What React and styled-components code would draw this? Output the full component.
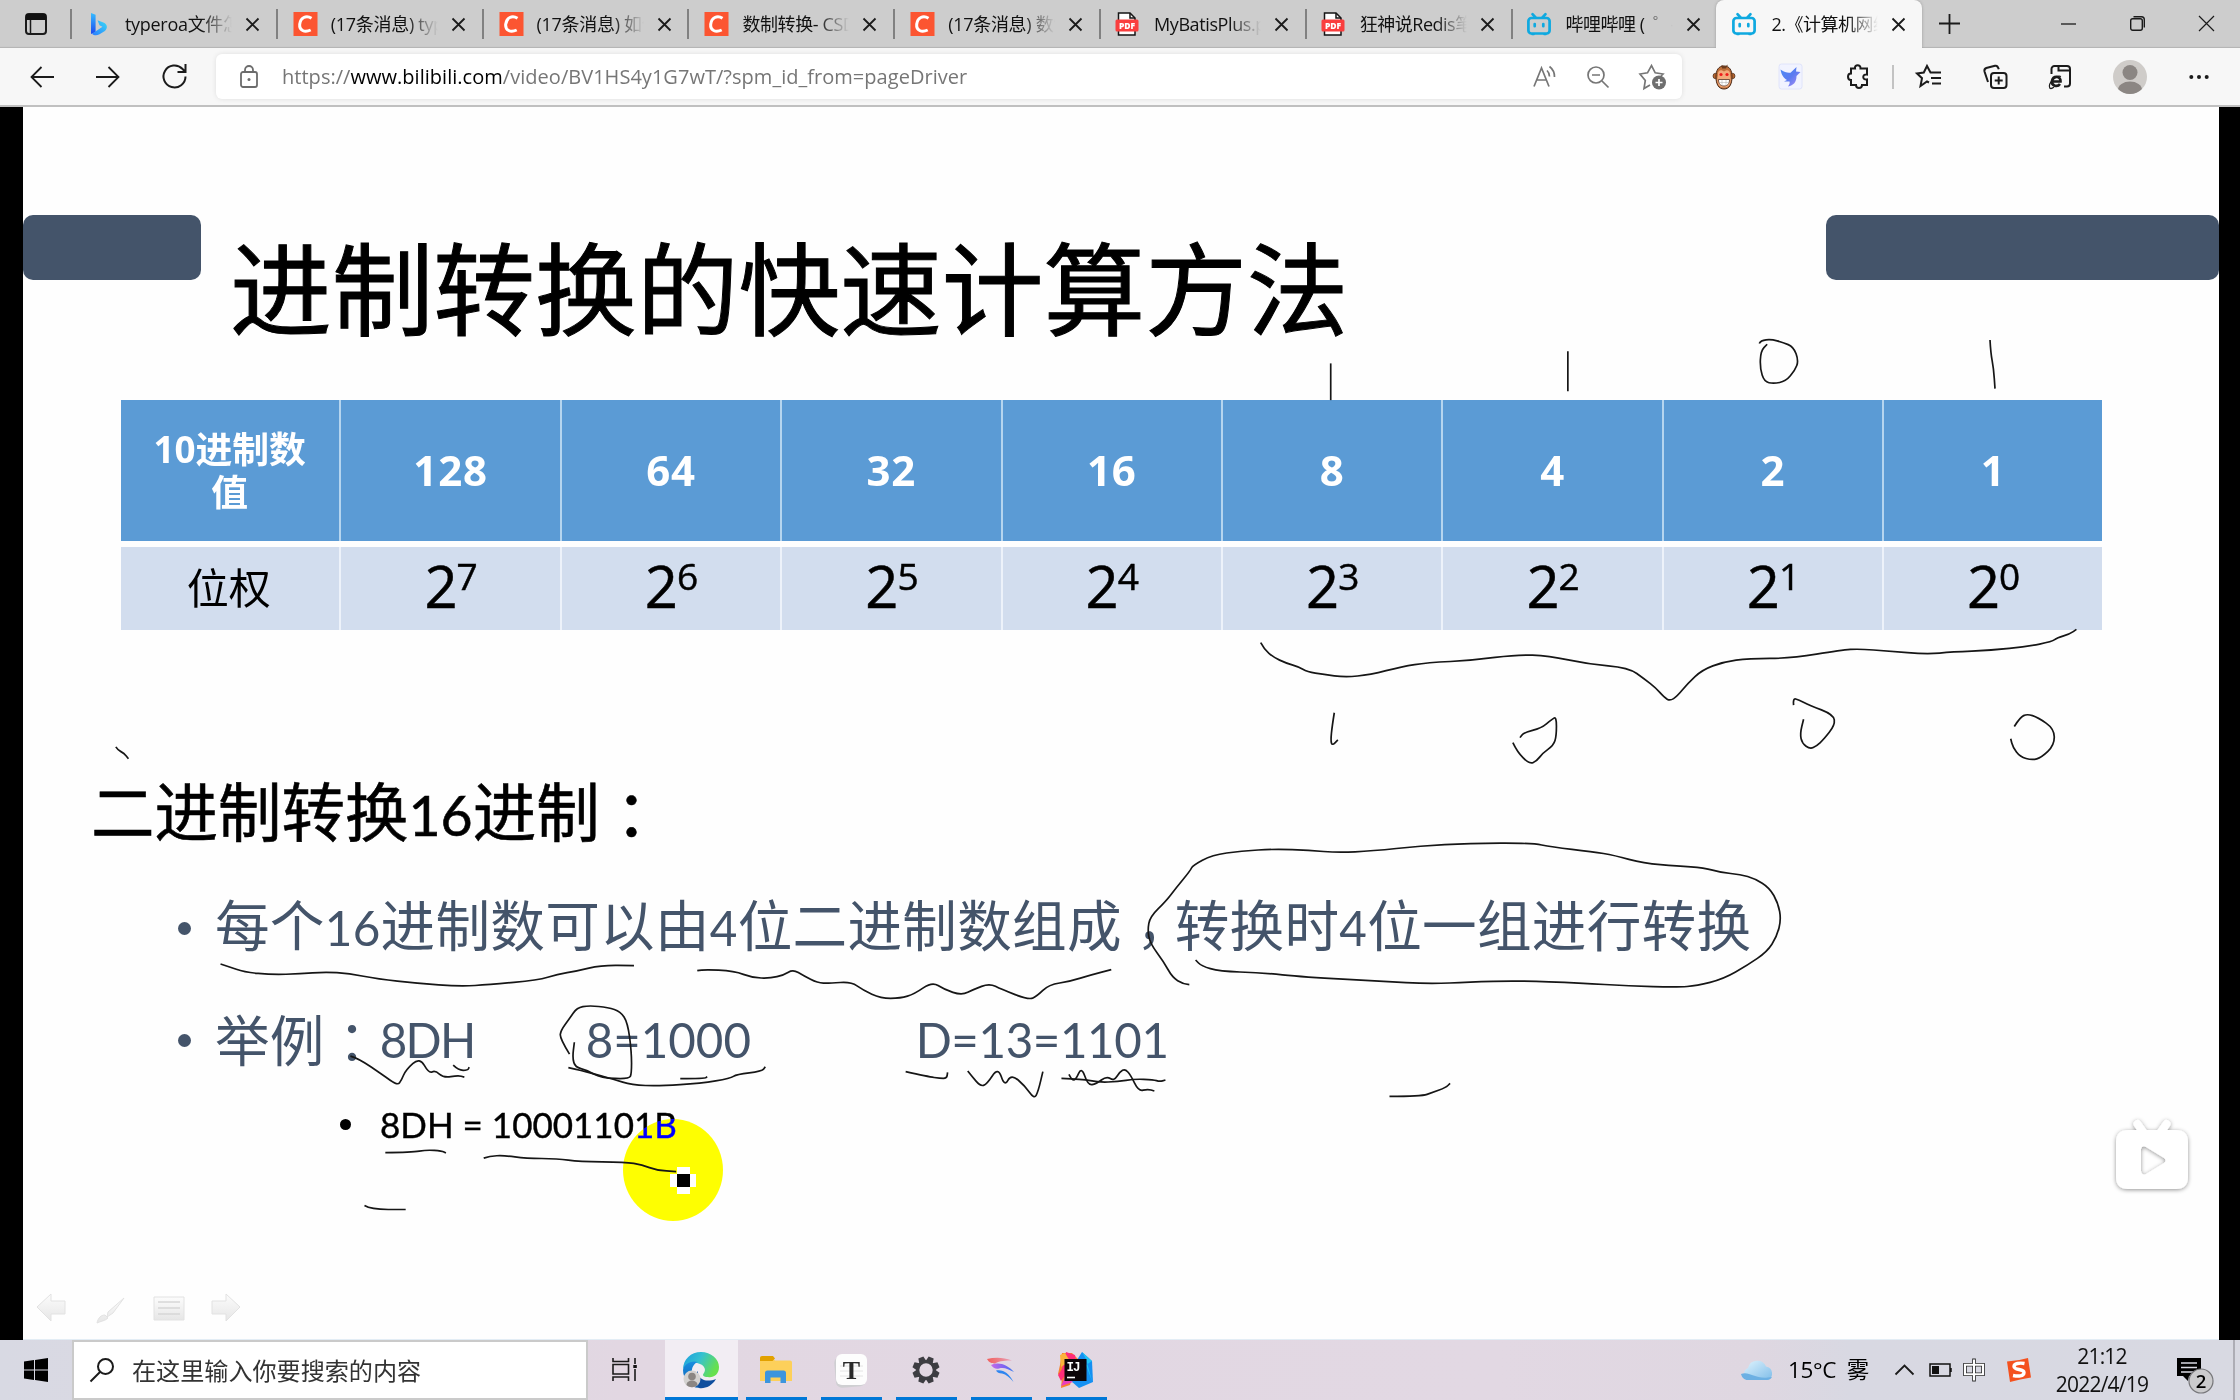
import React from "react";
import styled, { createGlobalStyle, css } from "styled-components";

const UI = `"Open Sans", "Noto Sans CJK SC", sans-serif`;
const HEI = `"Noto Sans CJK SC", sans-serif`;

const Global = createGlobalStyle`
  * { box-sizing: border-box; }
  html, body { margin: 0; background: #fff; }
  body { width: 2240px; height: 1400px; overflow: hidden; font-family: ${UI}; }
  svg { display: block; flex: none; overflow: visible; }
`;

const Screen = styled.div`
  width: 2240px;
  height: 1400px;
  display: flex;
  flex-direction: column;
`;

/* ---------- tab strip ---------- */
const TabStrip = styled.header`
  height: 48px;
  display: flex;
  background: #cdcdcd;
  box-shadow: inset 0 -2px 1px -1px #b4b4b4;
`;
const TabMenu = styled.div`
  width: 70px;
  padding: 13px 0 0 25px;
`;
const Tab = styled.div`
  width: ${(p) => (p.$active ? 206 : 205.8)}px;
  height: 48px;
  display: flex;
  align-items: center;
  padding-left: ${(p) => (p.$active ? 16 : 14)}px;
  ${(p) =>
    p.$active
      ? css`
          background: #f7f7f7;
          border-radius: 8px 8px 0 0;
          box-shadow: 0 0 3px #999;
          clip-path: inset(0 -4px 0 -4px);
        `
      : css`
          &::before {
            content: "";
            width: 2px;
            height: 30px;
            margin-left: -14px;
            margin-right: 14px;
            background: #818181;
          }
        `}
`;
const TabTitle = styled.div`
  width: 108px;
  margin: 0 13px 0 15px;
  overflow: hidden;
  white-space: pre;
  font-size: 18px;
  line-height: 30px;
  letter-spacing: ${(p) => p.$track ?? -0.5}px;
  color: #111;
  -webkit-mask-image: linear-gradient(90deg, #000 70%, transparent 99%);
  mask-image: linear-gradient(90deg, #000 70%, transparent 99%);
`;
const NewTab = styled.div`
  padding: 14px 0 0 17px;
  flex: 1;
`;
const WindowControls = styled.div`
  display: flex;
  gap: 54px;
  padding: 16px 26px 0 0;
`;

/* ---------- toolbar ---------- */
const Toolbar = styled.nav`
  height: 59px;
  display: flex;
  align-items: center;
  background: #f7f7f7;
  border-bottom: 2px solid #c0c0c0;
`;
const NavButtons = styled.div`
  width: 216px;
  display: flex;
  align-items: center;
  gap: 42px;
  padding-left: 30px;
`;
const AddressBar = styled.div`
  width: 1465.500px;
  height: 45px;
  display: flex;
  align-items: center;
  padding: 0 16px 0 24px;
  background: #fff;
  border-radius: 6px;
  box-shadow: 0 0 5px rgba(0, 0, 0, 0.1);
`;
const Url = styled.div`
  flex: 1;
  margin-left: 24px;
  font-size: 20px;
  letter-spacing: 0.03px;
  line-height: 44px;
  color: #767676;
  b { font-weight: 400; color: #000; }
`;
const AddressTools = styled.div`
  display: flex;
  align-items: center;
  gap: 30px;
`;
const Extensions = styled.div`
  flex: 1;
  display: flex;
  align-items: center;
  padding-left: 31px;
`;
const ExtItem = styled.div`
  margin-right: ${(p) => p.$after}px;
`;
const ToolDivider = styled.div`
  width: 2px;
  height: 24px;
  margin-right: 22px;
  background: #c3c3c3;
`;

/* ---------- slide ---------- */
const Stage = styled.main`
  height: 1233px;
  display: flex;
  background: #000;
`;
const Slide = styled.section`
  position: relative;
  width: 2196px;
  margin-left: 23px;
  background: #fefefe;
  border-bottom: 1px solid #e3edf5;
  padding-top: 108px;
`;
const SlideHeader = styled.div`
  height: 185px;
  display: flex;
`;
const Pill = styled.div`
  width: ${(p) => p.$w}px;
  height: 65px;
  background: #44546a;
  border-radius: 10px;
`;
const SlideTitle = styled.h1`
  flex: 1;
  margin: 9px 0 0 29px;
  font: 400 101.7px/120px ${HEI};
  -webkit-text-stroke: 1px #000;
  color: #000;
`;
const WeightTable = styled.div`
  width: 1981px;
  margin-left: 98px;
  display: grid;
  grid-template-columns: repeat(8, 220.4px) 1fr;
  grid-template-rows: 141px 83px;
  row-gap: 6px;
`;
const Cell = styled.div`
  display: flex;
  align-items: center;
  justify-content: center;
  border-right: 2px solid ${(p) => (p.$head ? "#b5d5ef" : "#edf2fa")};
  background: ${(p) => (p.$head ? "#5b9bd5" : "#d2ddee")};
  &:nth-child(9n) { border-right: 0; }
`;
const HeadLabel = styled.div`
  width: 162px;
  text-align: center;
  color: #fff;
  font: 700 36.800px/43px "Open Sans", "Noto Sans CJK SC", sans-serif;
  padding-right: 1px;
`;
const HeadNumber = styled.div`
  color: #fff;
  font: 700 42px/60px "Open Sans", sans-serif;
  letter-spacing: 0.8px;
  padding-bottom: 2px;
`;
const WeightLabel = styled.div`
  font: 400 42px/60px ${HEI};
  color: #000;
  padding: 0 3px 5px 0;
`;
const Power = styled.div`
  display: flex;
  font: 400 58px/70px "Open Sans", sans-serif;
  -webkit-text-stroke: 0.5px #000;
  letter-spacing: -1px;
  padding-bottom: 5px;
  color: #000;
  sup {
    font-size: 37px;
    line-height: 50px;
    vertical-align: baseline;
  }
`;
const SectionHeading = styled.h2`
  margin: 132px 0 0 68px;
  font: 400 63.5px/92px ${HEI};
  -webkit-text-stroke: 0.6px #000;
  color: #000;
`;
const Latin = styled.span`
  font-family: Lato, sans-serif;
  font-size: 0.872em;
`;
const Bullet = styled.div`
  display: flex;
  align-items: center;
  height: ${(p) => p.$h}px;
  margin-top: ${(p) => p.$top || 0}px;
  margin-left: ${(p) => p.$left}px;
  color: ${(p) => p.$color};
  white-space: pre;
  &::before {
    content: "";
    width: ${(p) => p.$dot}px;
    height: ${(p) => p.$dot}px;
    margin-right: ${(p) => p.$gap}px;
    border-radius: 50%;
    background: currentColor;
  }
`;
const BulletText = styled.div`
  font: 400 54.6px/80px ${HEI};
  letter-spacing: 0.28px;
  padding-bottom: 5px;
`;
const Centered = styled.span`
  font-family: "Noto Sans CJK TC", sans-serif;
  line-height: 0;
  margin-right: ${(p) => -(p.$tuck || 0)}px;
  vertical-align: ${(p) => -p.$drop}em;
`;
const Example = styled.div`
  width: ${(p) => p.$w}px;
  font: 400 47.500px/80px Lato, sans-serif;
  letter-spacing: ${(p) => p.$track || 0}px;
`;
const Result = styled.div`
  font: 400 35px/60px Lato, sans-serif;
  padding-bottom: 1px;
  -webkit-text-stroke: 0.4px #000;
`;
const Ink = styled.svg`
  position: absolute;
  left: -23px;
  top: -107px;
  path.ink {
    fill: none;
    stroke: #161616;
    stroke-width: 1.7px;
    vector-effect: non-scaling-stroke;
    stroke-linejoin: round;
  }
`;
const Highlight = styled.div`
  position: absolute;
  left: 600px;
  top: 1012px;
  width: 100px;
  height: 102px;
  border-radius: 50%;
  background: #0000ff;
  mix-blend-mode: difference;
`;

/* ---------- taskbar ---------- */
const Taskbar = styled.footer`
  height: 60px;
  display: flex;
  align-items: stretch;
  background: linear-gradient(90deg, #d8d9e3 0, #dcd8e3 300px, #e2d7e2 620px, #e2d8e3 1500px, #dfd7e1 1750px, #d8d8e2 1850px, #d8d9e2 100%);
`;
const Start = styled.div`
  width: 72px;
  padding: 18px 0 0 24px;
`;
const SearchBox = styled.div`
  width: 516px;
  display: flex;
  align-items: center;
  gap: 18px;
  padding-left: 16px;
  border: 2px solid #cacaca;
  background: #fff;
  font: 400 24.100px/56px ${HEI};
  color: #333;
`;
const TaskView = styled.div`
  width: 77px;
  padding: 18px 0 0 24px;
`;
const TaskApp = styled.div`
  width: ${(p) => (p.$active ? 73 : 61)}px;
  margin-right: ${(p) => (p.$active ? 8 : 14)}px;
  display: flex;
  align-items: center;
  justify-content: center;
  padding: 3px 2px 0 0;
  border-bottom: 3px solid #0078d7;
  background: ${(p) => (p.$active ? "#f2edf3" : "transparent")};
`;
const Tray = styled.div`
  margin-left: auto;
  display: flex;
  align-items: center;
`;
const Weather = styled.div`
  display: flex;
  align-items: center;
  gap: 14px;
  width: 154px;
  font-size: 22.500px;
  letter-spacing: -0.4px;
  white-space: pre;
  line-height: 56px;
`;
const TrayIcons = styled.div`
  display: flex;
  align-items: center;
  width: 160px;
`;
const TrayIcon = styled.div`
  margin-right: ${(p) => p.$after || 0}px;
`;
const Clock = styled.div`
  width: 94px;
  text-align: center;
  font-size: 21px;
  letter-spacing: -0.8px;
  line-height: 28px;
  white-space: nowrap;
  color: #111;
`;
const Notice = styled.div`
  margin: 0 19px 0 28px;
`;
const ShowDesktop = styled.div`
  align-self: stretch;
  width: 7px;
  border-left: 2px solid #adadb5;
`;

/* ---------- icons ---------- */
const Line = ({ w, h, vb, sw = 2, c = "#1b1b1b", children }) => (
  <svg width={w} height={h} viewBox={vb || `0 0 ${w} ${h}`} fill="none" stroke={c} strokeWidth={sw}>
    {children}
  </svg>
);
const CloseX = () => (
  <Line w={13} h={13} sw={1.8}><path d="M.5.5l12 12M12.5.5l-12 12" /></Line>
);
const Csdn = () => (
  <svg width="24" height="24" viewBox="-1.500 0 24 24"><rect width="24" height="24" fill="#fc5531" />
    <path d="M18 6.200C12.500 2.800 7 5.800 6.200 12.200c-.6 6.300 4.800 8.600 11 5.800" fill="none" stroke="#fff" strokeWidth="3" /></svg>
);
const Bing = () => (
  <svg width="24" height="24" viewBox="-1 0 24 24">
    <defs>
      <linearGradient id="bg1" x1="0" y1="0" x2="0" y2="1"><stop stopColor="#37bdff" /><stop offset="1" stopColor="#1b48ef" /></linearGradient>
      <linearGradient id="bg2" x1="0" y1="1" x2="1" y2="0"><stop stopColor="#2b7cff" /><stop offset="1" stopColor="#39dbf5" /></linearGradient>
    </defs>
    <path d="M4 1l4.600 1.700v17.200L4 22z" fill="url(#bg1)" />
    <path d="M10.500 8.200l2 5 3 1.500L5 21.800c2 2 5 2 7.500.5l5-3c3.500-2.700 3-7-.5-8.600z" fill="url(#bg2)" />
  </svg>
);
const Pdf = () => (
  <svg width="24" height="24" viewBox="0 0 24 24">
    <path d="M3.500 1H15l5 5v17H3.500z" fill="#fff" stroke="#151515" strokeWidth="1.500" />
    <path d="M15 1v5h5" fill="none" stroke="#151515" strokeWidth="1.500" />
    <rect x=".5" y="7.500" width="23" height="12" rx="1.500" fill="#fa3e3e" />
    <text x="12" y="16.500" textAnchor="middle" fontFamily="Open Sans" fontWeight="800" fontSize="8.500" fill="#fff">PDF</text>
  </svg>
);
const Bili = () => (
  <svg width="24" height="24" viewBox="0 0 24 24" fill="none" stroke="#0fa9e0" strokeWidth="2.700" strokeLinecap="round">
    <rect x="1.400" y="6" width="21.200" height="15.500" rx="3" />
    <path d="M5.500 2.200l3 3.300M18.500 2.200l-3 3.300M7.700 12v2.200M16.300 12v2.200" /><path d="M5 22.500h2M17 22.500h2" strokeWidth="1.600" />
  </svg>
);

const TABS = [
  { icon: Bing, title: "typeroa文件怎么", track: -0.3 },
  { icon: Csdn, title: "(17条消息) typora", track: -0.3 },
  { icon: Csdn, title: "(17条消息) 如何", track: -0.3 },
  { icon: Csdn, title: "数制转换- CSDN", track: -0.4 },
  { icon: Csdn, title: "(17条消息) 数制", track: -0.3 },
  { icon: Pdf, title: "MyBatisPlus.pdf", track: -0.4 },
  { icon: Pdf, title: "狂神说Redis笔记" },
  { icon: Bili, title: "哔哩哔哩 (  ゜- ゜)つロ" },
  { icon: Bili, title: "2.《计算机网络", active: true },
];

const BrowserTabs = () => (
  <TabStrip>
    <TabMenu>
      <Line w={22} h={22}><rect x="1" y="1" width="20" height="20" rx="3" /><path d="M1 1h20v6H1z" fill="#111" stroke="none" /><path d="M5.500 7v14" strokeWidth="1.500" /></Line>
    </TabMenu>
    {TABS.map((t, i) => (
      <Tab key={i} $active={t.active}>
        <t.icon />
        <TabTitle $track={t.track}>{t.title}</TabTitle>
        <CloseX />
      </Tab>
    ))}
    <NewTab><Line w={21} h={21} sw={1.8}><path d="M10.500 0v20M0 9.500h21" /></Line></NewTab>
    <WindowControls>
      <Line w={15} h={15} sw={1.3}><path d="M0 8h15" /></Line>
      <Line w={15} h={15} sw={1.4}><rect x=".7" y="2.700" width="11.600" height="11.600" rx="2" /><path d="M3.500 .7H11.500a2.800 2.800 0 0 1 2.800 2.800V11.500" /></Line>
      <Line w={15} h={15} sw={1.2}><path d="M0 0l15 15M15 0L0 15" /></Line>
    </WindowControls>
  </TabStrip>
);

const BrowserToolbar = () => (
  <Toolbar>
    <NavButtons>
      <Line w={24} h={22} sw={1.8}><path d="M24 11H1.500M11.500 1L1.500 11l10 10" /></Line>
      <Line w={24} h={22} sw={1.8}><path d="M0 11h22.500M12.500 1l10 10-10 10" /></Line>
      <Line w={25} h={25}><path d="M23.500 12.500A11 11 0 1 1 20.300 4.700L23 7.500M23.500 0v8h-8" /></Line>
    </NavButtons>
    <AddressBar>
      <Line w={18} h={23} c="#6c6c6c" sw={1.8}><rect x="1" y="7" width="16" height="15" rx="2" /><path d="M5 7V5a4 4 0 0 1 8 0v2" /><circle cx="9" cy="14.500" r="1.500" fill="#6c6c6c" stroke="none" /></Line>
      <Url>https://<b>www.bilibili.com</b>/video/BV1HS4y1G7wT/?spm_id_from=pageDriver</Url>
      <AddressTools>
        <Line w={24} h={23} c="#767676" sw={1.7}><path d="M1 21.500L8.500 3l7.500 18.500M3.700 15h9.600M14 5.500a8 8 0 0 1 2.500 6M16.500 1.500a13 13 0 0 1 5 10.500" /></Line>
        <Line w={22} h={22} c="#767676" sw={1.7}><circle cx="9" cy="9" r="8" /><path d="M15 15l6.500 6.500M5 9h8" /></Line>
        <Line w={27} h={26} c="#767676" sw={1.7}><path d="M11 21l-6 3.500 1.300-8L1 10l7.500-1.200L12.500 1.500l3.700 7.300L24 10l-2 2" /><circle cx="20" cy="18.500" r="7" fill="#6e6e6e" stroke="none" /><path d="M20 15v7M16.500 18.500h7" stroke="#fff" /></Line>
      </AddressTools>
    </AddressBar>
    <Extensions>
      <ExtItem $after={44}>
        <svg width="22" height="26" viewBox="0 0 22 26">
          <circle cx="2.800" cy="12" r="2.800" fill="#b5652f" stroke="#4b2a18" strokeWidth=".7" /><circle cx="19.200" cy="12" r="2.800" fill="#b5652f" stroke="#4b2a18" strokeWidth=".7" />
          <path d="M11 2c5.500 0 8 4 8 11s-2.500 12-8 12S3 20 3 13 5.500 2 11 2z" fill="#c0703a" stroke="#4b2a18" strokeWidth="1" />
          <path d="M8.500 1l3.500 1.500L15 .5l-2 4H9z" fill="#6b3c1e" />
          <path d="M11 7.500c4.500-3 6.500 0 6 3.500 2 8-.5 12.500-6 12.500S3 19 5 11c-.5-3.500 1.500-6.500 6-3.500z" fill="#f4ab7b" />
          <circle cx="8" cy="10.500" r="1.600" fill="#f01c1c" /><circle cx="14" cy="10.500" r="1.600" fill="#f01c1c" />
          <path d="M5.500 15.500h11c0 4.500-2 6.500-5.500 6.500s-5.500-2-5.500-6.500z" fill="#fff" stroke="#5a3320" strokeWidth=".8" /><path d="M6 18.500h10M9 16v5.500M13 16v5.500" stroke="#aaa" strokeWidth=".5" />
        </svg>
      </ExtItem>
      <ExtItem $after={45}>
        <svg width="23" height="25" viewBox="0 0 23 25">
          <defs><linearGradient id="bird" x1="0" y1="0" x2="1" y2="1"><stop stopColor="#4a8bf5" /><stop offset=".5" stopColor="#5a7bf0" /><stop offset="1" stopColor="#b08cf5" /></linearGradient></defs>
          <rect width="23" height="25" rx="2.500" fill="#f1f3ff" stroke="#e0e4fb" />
          <path d="M1.500 5.500c4 3 7 3.500 10 3.200L17.500 3l-.5 4.500 4.500.5-4 4c0 6-3 9.500-8.500 10.500 1.500-2 2-3.500 1.500-5H5l3-1.500c-3.500-2-5.500-5-6.500-10.500z" fill="url(#bird)" />
        </svg>
      </ExtItem>
      <ExtItem $after={24}>
        <Line w={21} h={25}><path d="M4 4.500h4c-.8-4.500 6-4.500 5.500 0H20v6c-5-1-5 6 0 5v5.500h-5c0 4-6 4-6 0H4v-5c-4 0-4-6.500 0-6.500z" /></Line>
      </ExtItem>
      <ToolDivider />
      <ExtItem $after={41}>
        <Line w={26} h={24}><path d="M13 17.500l-2-1-6.500 4.500 1.500-7.800L1 8.500l6.800-1L11 1l3.500 6.500H25M15 13h10M16 18.500h9" /></Line>
      </ExtItem>
      <ExtItem $after={41}>
        <Line w={25} h={24}><rect x="8" y="8" width="15.500" height="15" rx="3" /><path d="M15.700 11.500v8M11.700 15.500h8M5 17L1.500 6.500A3 3 0 0 1 3.300 3L12 .8c2-.5 3 .7 3.800 3.500" /></Line>
      </ExtItem>
      <ExtItem $after={41}>
        <svg width="23" height="24" viewBox="0 0 23 24" fill="none" stroke="#1b1b1b" strokeWidth="2">
          <path d="M2.500 9V4a3 3 0 0 1 3-3H18a3 3 0 0 1 3 3v14.500a3 3 0 0 1-3 3h-3M9.500 1v4.500H21" />
          <path d="M2 16.500h9.500c.5-6-7.500-6-8.500-.5-.8 5 5.500 6.500 8 3" strokeWidth="2.700" /><path d="M12 11.500C7 9.500-1.500 19 .8 23c1 1 3 0 4.200-1" strokeWidth="1.300" />
        </svg>
      </ExtItem>
      <ExtItem $after={42}>
        <svg width="34" height="34" viewBox="0 0 34 34">
          <defs><clipPath id="av"><circle cx="17" cy="17" r="17" /></clipPath></defs>
          <g clipPath="url(#av)"><rect width="34" height="34" fill="#cfccc9" /><circle cx="17" cy="12.500" r="7.500" fill="#8b8683" /><ellipse cx="17" cy="30" rx="12" ry="8.500" fill="#8b8683" /></g>
        </svg>
      </ExtItem>
      <svg width="20" height="6" fill="#1b1b1b"><circle cx="2.300" cy="3" r="2" /><circle cx="10" cy="3" r="2" /><circle cx="17.700" cy="3" r="2" /></svg>
    </Extensions>
  </Toolbar>
);

/* Turns "x,y x,y ..." into a path that runs smoothly through the midpoints. */
const stroke = (text) => {
  const p = text.trim().split(/\s+/).map((s) => s.split(",").map(Number));
  let d = `M${p[0]}`;
  for (let i = 1; i < p.length - 1; i++) {
    const [x, y] = p[i];
    const [nx, ny] = p[i + 1];
    d += `Q${x},${y} ${(x + nx) / 2},${(y + ny) / 2}`;
  }
  return `${d}L${p[p.length - 1]}`;
};

const INK = [
  {
    at: "translate(1120 200) scale(.71429 .38265)",
    lines: [
      "295,427 295,523",
      "627,395 627,500",
      "895,375 897,367 912,364 928,372 943,384 950,420 945,445 932,474 915,480 902,475 896,440 897,395 906,377",
      "1218,366 1219,400 1223,440 1225,493",
      "197,1157 202,1175 215,1195 232,1210 250,1220 262,1233 285,1240 315,1247 350,1241 395,1219 430,1209 495,1203 555,1188 600,1191 655,1213 712,1222 735,1253 750,1275 762,1300 770,1309 780,1297 795,1263 815,1228 845,1207 880,1198 940,1198 1010,1176 1035,1173 1075,1179 1130,1187 1165,1181 1220,1177 1270,1167 1305,1154 1312,1144 1330,1134 1339,1122",
      "300,1340 297,1375 295,1412 297,1426 305,1411",
      "550,1418 556,1442 573,1474 583,1467 592,1445 607,1425 611,1400 611,1350 604,1358 590,1380 565,1392 560,1405",
      "943,1320 942,1302 950,1306 965,1320 999,1345 1001,1372 985,1410 975,1427 966,1435 955,1420 952,1395 957,1357",
      "1252,1376 1260,1352 1270,1343 1285,1352 1308,1382 1308,1425 1290,1457 1277,1464 1260,1455 1250,1430 1247,1408",
    ],
  },
  {
    at: "translate(0 720) scale(.48469 .39541)",
    lines: [
      "239,68 243,76 256,84 265,98",
      "455,617 470,623 505,638 560,644 620,642 670,637 720,641 780,655 860,666 950,674 1010,669 1110,658 1150,643 1190,635 1240,620 1308,621",
      "723,850 740,856 790,898 820,924 828,912 837,885 866,853 885,894 898,886 915,905 945,899 958,903",
      "935,873 946,886 965,886 968,878",
      "1175,845 1155,805 1157,785 1175,755 1190,728 1215,722 1255,727 1280,737 1295,765 1303,840 1303,895 1298,908 1240,905 1210,885 1187,878 1181,855 1185,815",
      "795,1094 850,1094 880,1087 912,1090 920,1095",
      "998,1108 1010,1103 1040,1101 1085,1109 1150,1109 1195,1117 1290,1118 1325,1125 1355,1139 1395,1142",
      "752,1228 765,1238 837,1238",
    ],
  },
  {
    at: "translate(600 820) scale(.39541 .33333)",
    lines: [
      "-80,743 -45,752 0,767 35,778 80,795 150,798 255,790 330,775 345,763 410,754 418,740",
      "203,776 265,776 271,770",
      "246,452 260,448 340,453 385,473 430,475 465,465 488,448 515,467 550,489 580,490 635,485 665,510 710,535 760,535 795,522 840,485 870,508 915,526 945,508 985,490 1015,508 1085,540 1105,528 1135,494 1190,484 1240,465 1293,449",
      "773,755 830,770 860,775 877,775 879,757",
      "930,753 940,768 962,799 978,793 1007,741 1023,800 1040,762 1075,798 1098,837 1108,815 1120,755",
      "1167,775 1220,777 1260,787 1310,785 1350,777 1400,779 1415,785 1430,780",
      "1186,763 1193,780 1203,780 1218,740 1234,796 1255,792 1281,768 1300,783 1315,755 1328,747 1342,765 1362,814 1385,807 1402,813",
    ],
  },
  {
    at: "translate(1120 820) scale(.48469 .33333)",
    lines: [
      "143,494 130,492 108,472 90,425 62,370 57,330 62,290 95,243 115,205 145,152 150,136 190,105 250,93 320,87 390,91 450,98 520,93 620,78 720,70 850,69 890,81 975,95 1020,106 1080,130 1150,138 1205,143 1240,158 1280,163 1310,176 1340,203 1358,250 1364,300 1355,350 1335,395 1295,435 1245,477 1190,497 1150,502 1050,498 950,489 820,482 720,486 640,492 540,484 380,471 290,458 205,454 168,438 156,420",
      "556,829 622,829 645,817 672,803 681,790",
    ],
  },
];

const Annotations = () => (
  <Ink width="2240" height="1340" viewBox="0 0 2240 1340">
    {INK.map((g) => (
      <g key={g.at} transform={g.at}>
        {g.lines.map((l) => <path key={l} className="ink" d={stroke(l)} />)}
      </g>
    ))}
    <path d="M677 1167h13v7h6v13h-6v7h-13v-7h-7v-13h7z" fill="#fff" />
    <rect x="677" y="1174" width="13" height="13" fill="#000" />

    <defs>
      <linearGradient id="ghost" x1="0" y1="0" x2="0" y2="1"><stop stopColor="#fcfcfc" /><stop offset="1" stopColor="#e6e6e6" /></linearGradient>
      <filter id="soft" x="-30%" y="-30%" width="160%" height="160%"><feDropShadow dx="0" dy="1" stdDeviation="2" floodColor="#000" floodOpacity=".42" /></filter>
    </defs>
    <g fill="url(#ghost)" stroke="#e2e2e2" strokeWidth="1">
      <path d="M37 1307l14-13v7h14v13H51v7z" />
      <path d="M124 1298l-11 15-6 4 1-5zM97 1323c1-5 4-8 8-8l3 3c-3 3-7 3-11 5z" />
      <path d="M154 1297h30v23h-30z" /><path d="M158 1302h22M158 1308h22M158 1314h22" stroke="#d6d6d6" strokeWidth="1.500" />
      <path d="M240 1307l-14-13v7h-14v13h14v7z" />
    </g>
    <g filter="url(#soft)">
      <path d="M2137.500 1124l7 10M2166.500 1124l-7 10" stroke="#fff" strokeWidth="8" strokeLinecap="round" />
      <path fillRule="evenodd" fill="#fff" d="M2128 1130h48q12 0 12 12v35q0 12-12 12h-48q-12 0-12-12v-35q0-12 12-12zM2141 1149v22q1 5 5 3l18-11q3-2.500 0-5l-18-11q-4-2-5 2z" />
    </g>
  </Ink>
);

const COLUMNS = [128, 64, 32, 16, 8, 4, 2, 1];

const Presentation = () => (
  <Stage>
    <Slide>
      <SlideHeader>
        <Pill $w={178} />
        <SlideTitle>进制转换的快速计算方法</SlideTitle>
        <Pill $w={393} />
      </SlideHeader>
      <WeightTable>
        <Cell $head><HeadLabel>10进制数值</HeadLabel></Cell>
        {COLUMNS.map((n) => <Cell key={n} $head><HeadNumber>{n}</HeadNumber></Cell>)}
        <Cell><WeightLabel>位权</WeightLabel></Cell>
        {COLUMNS.map((n, i) => <Cell key={n}><Power>2<sup>{7 - i}</sup></Power></Cell>)}
      </WeightTable>
      <SectionHeading>二进制转换<Latin>16</Latin>进制<Centered $drop={0.06}>：</Centered></SectionHeading>
      <Bullet $top={11} $h={112} $left={155} $dot={13} $gap={24} $color="#44546a">
        <BulletText>
          每个<Latin>16</Latin>进制数可以由<Latin>4</Latin>位二进制数组成<Centered $drop={0.26} $tuck={2}>，</Centered>转换时<Latin>4</Latin>位一组进行转换
        </BulletText>
      </Bullet>
      <Bullet $h={112} $left={155} $dot={13} $gap={24} $color="#44546a">
        <BulletText>举例<Centered $drop={0.04}>：</Centered></BulletText>
        <Example $w={206} $track={-1.7}>8DH</Example>
        <Example $w={330}>8=1000</Example>
        <Example $track={-0.4}>D=13=1101</Example>
      </Bullet>
      <Bullet $h={56} $left={317} $dot={11} $gap={29} $color="#000">
        <Result>8DH = 10001101B</Result>
      </Bullet>
      <Highlight />
      <Annotations />
    </Slide>
  </Stage>
);

const EdgeIcon = () => (
  <svg width="36" height="36" viewBox="0 0 36 36">
    <defs>
      <linearGradient id="e1" x1="0" y1="0" x2="1" y2=".4"><stop stopColor="#1b9de0" /><stop offset=".5" stopColor="#35c1d0" /><stop offset="1" stopColor="#66e04e" /></linearGradient>
      <linearGradient id="e2" x1="0" y1="0" x2="0" y2="1"><stop stopColor="#1a8fe0" /><stop offset="1" stopColor="#0c5cb0" /></linearGradient>
    </defs>
    <path d="M0 18C0 7 8 0 18 0s18 7 18 15-6 11-11 10c-5 0-6-2-4-4 2-3 1-7-4-9C10 9 2 12 0 18z" fill="url(#e1)" />
    <path d="M0 18c1-6 8-10 15-8-4 1-7 6-6 12s6 11 12 13C9 39 0 28 0 18z" fill="url(#e2)" />
    <path d="M15 19c-1 8 8 12 18 8-4 7-11 10-17 9-5-5-6-12-1-17z" fill="#0f4f9e" />
    <circle cx="9" cy="27" r="8.500" fill="#d4d2d0" /><circle cx="9" cy="24.500" r="3.800" fill="#8b8683" /><path d="M3.500 33c0-6 11-6 11 0-3 3-8 3-11 0z" fill="#8b8683" />
  </svg>
);
const FolderIcon = () => (
  <svg width="32" height="28" viewBox="0 0 32 28">
    <path d="M0 1.500h12l3 3H30a2 2 0 0 1 2 2V25H0z" fill="#fdd05a" /><path d="M0 5V2a2 2 0 0 1 2-2h11l2 2.500L12.500 5z" fill="#e2a100" />
    <path d="M5 27V17a2.500 2.500 0 0 1 2.500-2.500h16A2.500 2.500 0 0 1 26 17v10h-5.500v-5.500h-10V27z" fill="#3c95dd" />
  </svg>
);
const TyporaIcon = () => (
  <svg width="34" height="35" viewBox="0 0 34 35">
    <rect x="1" y="3" width="30" height="31" rx="6" fill="#cfcfd2" transform="rotate(-5 16 18)" />
    <rect x="2" y="1" width="31" height="31" rx="6" fill="#fdfdfd" />
    <path d="M6 13h23M6 18h23M6 23h23" stroke="#e4e4e4" />
    <text x="17.500" y="25.500" textAnchor="middle" fontFamily="Liberation Serif" fontWeight="700" fontSize="26" fill="#2b2b2b">T</text>
  </svg>
);
const GearIcon = () => (
  <svg width="28" height="28" viewBox="-14 -14 28 28" fill="#3d3d42">
    {[0, 45, 90, 135, 180, 225, 270, 315].map((a) => <path key={a} transform={`rotate(${a + 22.5})`} d="M-2.700-13.500h5.400l1 5h-7.400z" />)}
    <circle r="8.300" fill="none" stroke="#3d3d42" strokeWidth="3.200" />
  </svg>
);
const WingIcon = () => (
  <svg width="28" height="26" viewBox="0 0 28 26">
    <defs>
      <linearGradient id="w1" x1="0" x2="1"><stop stopColor="#f25f5c" /><stop offset="1" stopColor="#e8a0b8" /></linearGradient>
      <linearGradient id="w2" x1="0" x2="1"><stop stopColor="#c66be8" /><stop offset=".6" stopColor="#7a63f2" /><stop offset="1" stopColor="#2f7cf0" /></linearGradient>
    </defs>
    <path d="M0 2C8 0 16 0 25 3.500c-6 0-12 0-17 3C6 6.500 2 6 0 2z" fill="url(#w1)" />
    <path d="M4 8c8-3.500 16-.5 23 7-6-3-10-5-15-3.500C9 12.500 6 11 4 8z" fill="url(#w2)" />
    <path d="M9 13.500c7-1.500 13 2.500 17.500 11.500-3.500-4.500-7.500-7.500-11.500-8.500-3 0-5-1-6-3z" fill="#2f86f0" />
  </svg>
);
const IdeaIcon = () => (
  <svg width="35" height="36" viewBox="0 0 35 36">
    <path d="M4 1l10 0 6 6-8 26-9 3 1-11-4-3 2-9z" fill="#f6822c" /><path d="M8 0l9 3 1 6-15 20-3-6 4-6z" fill="#ff2d78" />
    <path d="M2 3l5-2 5 8-9 6z" fill="#fbb33a" /><path d="M19 8l5-8 10 9 1 21-14 6-8-7z" fill="#1590f2" /><path d="M24 0l10 9-6 4 6 16-6-22z" fill="#20c4f4" /><path d="M3 34l4-9 8 5z" fill="#e83fc0" />
    <rect x="6.500" y="7" width="22" height="22" fill="#0c0508" />
    <text x="8.500" y="18.500" fontFamily="Liberation Mono" fontWeight="700" fontSize="12.500" letterSpacing="-1" fill="#fff">IJ</text>
    <path d="M9 25.500h8" stroke="#fff" strokeWidth="1.600" />
  </svg>
);
const APPS = [FolderIcon, TyporaIcon, GearIcon, WingIcon, IdeaIcon];

const DesktopTaskbar = () => (
  <Taskbar>
    <Start>
      <svg width="24" height="24" fill="#000"><path d="M0 3.500l10-1.400v9.400H0zM11 2L24 0v11.500H11zM0 12.500h10v9.400L0 20.500zM11 12.500h13V24l-13-2z" /></svg>
    </Start>
    <SearchBox>
      <Line w={24} h={24} sw={2}><circle cx="15.500" cy="8.500" r="7.500" /><path d="M10 14L.5 23.500" /></Line>
      在这里输入你要搜索的内容
    </SearchBox>
    <TaskView>
      <Line w={25} h={23} sw={1.6}><path d="M1 0v3.500h15.500V0M1 6.500h15.500v9.500H1zM1 23v-4h15.500v4M23 0v6M23 11v12" /><path d="M21.300 7h3.500v3h-3.500z" fill="#111" stroke="none" /></Line>
    </TaskView>
    <TaskApp $active><EdgeIcon /></TaskApp>
    {APPS.map((Icon, i) => <TaskApp key={i}><Icon /></TaskApp>)}
    <Tray>
      <Weather>
        <svg width="33" height="21" viewBox="0 0 33 21">
          <defs><linearGradient id="cl" x1="0" y1="0" x2="1" y2="1"><stop stopColor="#dff3fd" /><stop offset="1" stopColor="#7fbde9" /></linearGradient></defs>
          <path d="M7 20a6.500 6.500 0 0 1 0-12A9.500 9.500 0 0 1 25 6.500 7 7 0 0 1 26.500 20z" fill="url(#cl)" /><path d="M0 14c8-3 14 5 27 3.500l4-.5c-1 2-3 3-5 3H7c-4 0-6-2.500-7-6z" fill="#6cb0e3" />
        </svg>
        15°C  雾
      </Weather>
      <TrayIcons>
        <TrayIcon $after={15}><Line w={19} h={10} sw={1.8}><path d="M.5 9.500l9-9 9 9" /></Line></TrayIcon>
        <TrayIcon $after={11}>
          <svg width="23" height="14"><path d="M1 1h20v12H1zM22 5v4" fill="none" stroke="#111" strokeWidth="1.500" /><path d="M3 3h7v8H3z" fill="#111" /></svg>
        </TrayIcon>
        <TrayIcon $after={21}>
          <svg width="22" height="24" viewBox="0 0 22 24" fill="none"><path d="M2 6.800h18v9.400H2zM11 .5v23" stroke="#2a2a2a" strokeWidth="3.600" /><path d="M2 6.800h18v9.400H2zM11 1.500v21" stroke="#fff" strokeWidth="2" /></svg>
        </TrayIcon>
        <svg width="25" height="24" viewBox="0 0 25 24"><path d="M1 3.500Q12 3 22 0l3 19.500Q14 21 4 24z" fill="#f4511e" /><path d="M18.500 5.500c-5-1-10.500 0-10.500 3 0 4 10 2 10 6s-6 4-11 3" fill="none" stroke="#fff" strokeWidth="3.400" /></svg>
      </TrayIcons>
      <Clock>21:12<br />2022/4/19</Clock>
      <Notice>
        <svg width="37" height="36" viewBox="0 0 37 36">
          <path d="M0 6h24v18H12l-1 5-5-5H0z" fill="#000" /><path d="M4 11h16M4 15.500h16M4 20h12" stroke="#d9d9e2" strokeWidth="1.500" />
          <circle cx="24" cy="29" r="12" fill="#cbcbcd" stroke="#77777a" strokeWidth="1.200" />
          <text x="24" y="35.500" textAnchor="middle" fontFamily="Open Sans" fontWeight="600" fontSize="18.500" fill="#000">2</text>
        </svg>
      </Notice>
      <ShowDesktop />
    </Tray>
  </Taskbar>
);

export default function App() {
  return (
    <Screen>
      <Global />
      <BrowserTabs />
      <BrowserToolbar />
      <Presentation />
      <DesktopTaskbar />
    </Screen>
  );
}
